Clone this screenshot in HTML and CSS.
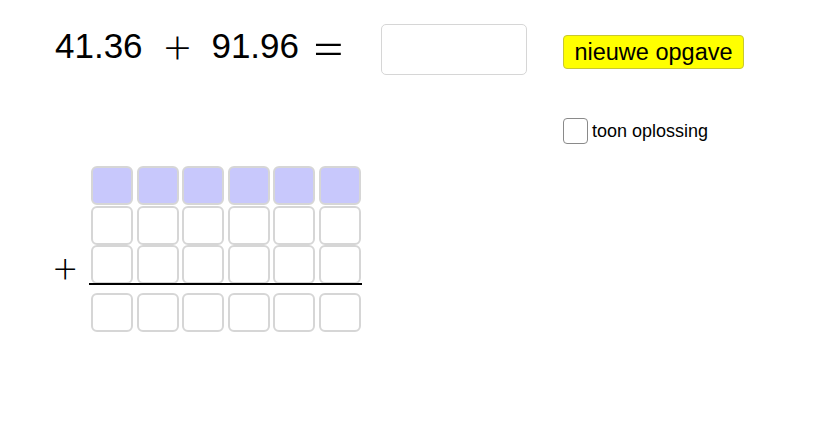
FILE: index.html
```html
<!doctype html>
<html lang="nl">
<head>
  <meta charset="utf-8">
  <meta name="viewport" content="width=device-width, initial-scale=1">
  <title>Optellen</title>
  <link rel="stylesheet" href="styles.css">
</head>
<body>

  <div class="applet">

    <div class="top">
      <div class="equation"><span class="num">41.36</span><span class="op plus">+</span><span class="num">91.96</span><span class="op eq">=</span></div>
      <input class="answer" type="text" aria-label="antwoord">
      <div class="controls">
        <button class="new-task">nieuwe opgave</button>
        <label class="show">
          <span class="box"></span>
          <span>toon oplossing</span>
        </label>
      </div>
    </div>

    <div class="work">
      <div class="side">
        <span class="small-plus">+</span>
      </div>
      <div class="sheet">
        <div class="cells">
          <div class="cell carry"></div>
          <div class="cell carry"></div>
          <div class="cell carry"></div>
          <div class="cell carry"></div>
          <div class="cell carry"></div>
          <div class="cell carry"></div>

          <div class="cell"></div>
          <div class="cell"></div>
          <div class="cell"></div>
          <div class="cell"></div>
          <div class="cell"></div>
          <div class="cell"></div>

          <div class="cell"></div>
          <div class="cell"></div>
          <div class="cell"></div>
          <div class="cell"></div>
          <div class="cell"></div>
          <div class="cell"></div>
        </div>
        <div class="line"></div>
        <div class="cells">
          <div class="cell"></div>
          <div class="cell"></div>
          <div class="cell"></div>
          <div class="cell"></div>
          <div class="cell"></div>
          <div class="cell"></div>
        </div>
      </div>
    </div>

  </div>

</body>
</html>
```

FILE: styles.css
```css
:root {
  --cell-border: #d6d6d6;
  --carry: #c8c8fc;
  --yellow: #ffff00;
}

html {
  background-color: #fff;
}
body {
  margin: 0;
  font-family: "Liberation Sans", Arial, sans-serif;
  color: #000;
}
.applet {
  width: 820px;
  height: 421px;
}

/* top row */
.top {
  display: flex;
  align-items: flex-start;
  padding-top: 24px;
}
.equation {
  width: 381px;
  height: 35px;
  flex-shrink: 0;
  box-sizing: border-box;
  padding-left: 55px;
  margin-top: 4px;
  font-size: 35px;
  line-height: 35px;
  white-space: nowrap;
}
.equation .op {
  font-family: Lato, "Liberation Sans", sans-serif;
  font-weight: 300;
  line-height: 0;
}
.plus {
  font-size: 48px;
  vertical-align: -6px;
  margin: 0 20px 0 21px;
}
.eq {
  font-size: 60px;
  vertical-align: -11px;
  margin-left: 12px;
}
.answer {
  width: 146px;
  height: 51px;
  flex-shrink: 0;
  box-sizing: border-box;
  border: 1px solid #d6d6d6;
  border-radius: 5px;
  padding: 0;
  margin: 0;
}
.controls {
  margin-left: 36px;
  padding-top: 11px;
  display: flex;
  flex-direction: column;
  align-items: flex-start;
  gap: 49px;
}
.new-task {
  width: 181px;
  height: 34px;
  background-color: var(--yellow);
  border: 1px solid #c8c832;
  border-radius: 4px;
  font-family: "Liberation Sans", Arial, sans-serif;
  font-size: 23.5px;
  color: #000;
  padding: 0;
}
.show {
  display: flex;
  align-items: center;
  gap: 4px;
  font-size: 18px;
}
.box {
  width: 25px;
  height: 26px;
  box-sizing: border-box;
  border: 1px solid #8a8a8a;
  border-radius: 4px;
}

/* column sum */
.work {
  display: flex;
  padding-left: 53px;
  margin-top: 22px;
}
.side {
  width: 36px;
  padding-top: 80px;
}
.small-plus {
  font-family: Lato, "Liberation Sans", sans-serif;
  font-weight: 300;
  font-size: 42px;
  line-height: 1;
}
.sheet {
  display: flex;
  flex-direction: column;
}
.cells {
  display: grid;
  grid-template-columns: repeat(6, 42px);
  grid-auto-rows: 39px;
  column-gap: 3.6px;
  row-gap: 0.5px;
  margin-left: 2px;
}
.cell {
  box-sizing: border-box;
  border: 2px solid var(--cell-border);
  border-radius: 6px;
  background-color: #fff;
}
.cell.carry {
  background-color: var(--carry);
}
.line {
  width: 273px;
  height: 2px;
  background-color: #000;
  margin: -1px 0 8px;
}
```
